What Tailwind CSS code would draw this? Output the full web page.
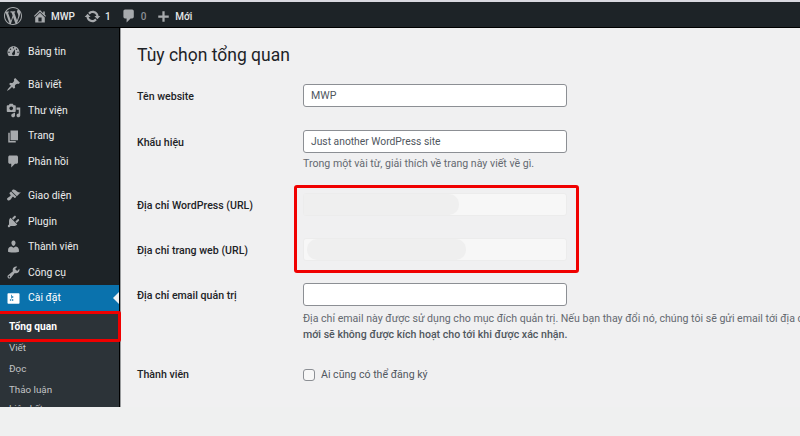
<!DOCTYPE html>
<html lang="en">
<head>
<meta charset="UTF-8">
<title>Tùy chọn tổng quan</title>
<script src="https://cdn.jsdelivr.net/npm/@tailwindcss/browser@4"></script>
</head>
<body class="w-[800px] h-[436px] overflow-hidden bg-[#eff0f0] font-['Roboto','Noto_Sans',sans-serif] text-[10.6px] text-[#3c434a]">
<div class="relative h-[436px] flex flex-col overflow-hidden">
  <!-- Top bar -->
  <div class="h-[28px] shrink-0 bg-[#1d2327] border-t-2 border-t-[#d9d9e0] border-b border-b-black pt-[3px] flex items-center text-[#e6e8e9] text-[10px] font-medium">
    <svg class="w-[18px] h-[18px] ml-[4px] text-[#a7aaad]" viewBox="0 0 20 20" fill="currentColor"><path d="M20 10c0-5.51-4.49-10-10-10C4.48 0 0 4.49 0 10c0 5.52 4.48 10 10 10 5.51 0 10-4.48 10-10zM7.78 15.37L4.37 6.22c.55-.02 1.17-.08 1.17-.08.5-.06.44-1.13-.06-1.11 0 0-1.45.11-2.37.11-.18 0-.37 0-.58-.01C4.12 2.69 6.87 1.11 10 1.11c2.33 0 4.45.87 6.05 2.34-.68-.11-1.65.39-1.65 1.58 0 .74.45 1.36.9 2.1.35.61.55 1.36.55 2.46 0 1.49-1.4 5-1.4 5l-3.03-8.37c.54-.02.82-.17.82-.17.5-.05.44-1.25-.06-1.22 0 0-1.44.12-2.38.12-.87 0-2.33-.12-2.33-.12-.5-.03-.56 1.2-.06 1.22l.92.08 1.26 3.41zM17.41 10c.24-.64.74-1.87.43-4.25.7 1.29 1.05 2.71 1.05 4.25 0 3.29-1.73 6.24-4.4 7.78.97-2.59 1.94-5.2 2.92-7.78zM6.1 18.09C3.12 16.65 1.11 13.53 1.11 10c0-1.3.23-2.48.72-3.59C3.25 10.3 4.67 14.2 6.1 18.09zm4.03-6.63l2.58 6.98c-.86.29-1.76.45-2.71.45-.79 0-1.57-.11-2.29-.33.81-2.38 1.62-4.74 2.42-7.1z"/></svg>
    <svg class="w-[16px] h-[16px] ml-[10px] text-[#a7aaad]" viewBox="0 0 20 20" fill="currentColor"><path d="M16 8.5l1.53 1.53-1.06 1.06L10 4.62l-6.47 6.47-1.06-1.06L10 2.5l4 4v-2h2v4zm-6-2.46l6 5.99V18H4v-5.97zM12 17v-5H8v5h4z"/></svg>
    <span class="ml-[3px]">MWP</span>
    <svg class="w-[17px] h-[17px] ml-[9px] text-[#a7aaad]" viewBox="0 0 20 20" fill="currentColor"><path d="M10.2 3.28c3.53 0 6.43 2.61 6.92 6h2.08l-3.5 4-3.5-4h2.32c-.45-1.97-2.21-3.45-4.32-3.45-1.45 0-2.73.71-3.54 1.78L4.95 5.66C6.23 4.2 8.11 3.28 10.2 3.28zm-.4 13.44c-3.52 0-6.43-2.61-6.92-6H.8l3.5-4c1.17 1.33 2.33 2.67 3.5 4H5.48c.45 1.97 2.21 3.45 4.32 3.45 1.45 0 2.73-.71 3.54-1.78l1.71 1.95c-1.28 1.46-3.15 2.38-5.25 2.38z"/></svg>
    <span class="ml-[4px]">1</span>
    <svg class="w-[16px] h-[16px] ml-[10px] text-[#a7aaad]" viewBox="0 0 20 20" fill="currentColor"><path d="M5 2h9c1.1 0 2 .9 2 2v7c0 1.1-.9 2-2 2h-2l-5 5v-5H5c-1.1 0-2-.9-2-2V4c0-1.1.9-2 2-2z"/></svg>
    <span class="ml-[4px] text-[#8c8f94]">0</span>
    <svg class="w-[15px] h-[15px] ml-[10px] text-[#a7aaad]" viewBox="0 0 20 20" fill="currentColor"><path d="M17 8.5v3h-5.5V17h-3v-5.5H3v-3h5.5V3h3v5.5z"/></svg>
    <span class="ml-[4px]">Mới</span>
  </div>

  <div class="flex h-[379px] shrink-0">
    <!-- Sidebar -->
    <aside class="w-[120px] shrink-0 bg-[#1d2327] border-r border-r-black flex flex-col overflow-hidden text-[#eceded] text-[10.4px]">
      <div class="h-[11px] shrink-0"></div>
      <a class="h-[25.6px] shrink-0 flex items-center"><svg class="w-[15px] h-[15px] ml-[6px] mr-[7px] text-[#a7aaad]" viewBox="0 0 20 20" fill="currentColor"><path d="M3.76 16h12.48c1.1-1.37 1.76-3.11 1.76-5 0-4.42-3.58-8-8-8s-8 3.58-8 8c0 1.89.66 3.63 1.76 5zM10 4c.55 0 1 .45 1 1s-.45 1-1 1-1-.45-1-1 .45-1 1-1zM6 6c.55 0 1 .45 1 1s-.45 1-1 1-1-.45-1-1 .45-1 1-1zm8 0c.55 0 1 .45 1 1s-.45 1-1 1-1-.45-1-1 .45-1 1-1zm-5.37 5.55L12 7v6c0 1.1-.9 2-2 2s-2-.9-2-2c0-.57.24-1.08.63-1.45zM4 10c.55 0 1 .45 1 1s-.45 1-1 1-1-.45-1-1 .45-1 1-1zm12 0c.55 0 1 .45 1 1s-.45 1-1 1-1-.45-1-1 .45-1 1-1z"/></svg>Bảng tin</a>
      <div class="h-[7.6px] shrink-0"></div>
      <a class="h-[25.6px] shrink-0 flex items-center"><svg class="w-[15px] h-[15px] ml-[6px] mr-[7px] text-[#a7aaad]" viewBox="0 0 20 20" fill="currentColor"><path d="M10.44 3.02l1.82-1.82 6.36 6.35-1.83 1.82c-1.05-.68-2.48-.57-3.41.36l-.75.75c-.92.93-1.04 2.35-.35 3.41l-1.83 1.82-2.41-2.41-2.8 2.79c-.42.42-3.38 2.71-3.8 2.29s1.86-3.39 2.28-3.81l2.79-2.79L4.1 9.36l1.83-1.82c1.05.69 2.48.57 3.4-.36l.75-.75c.93-.92 1.05-2.35.36-3.41z"/></svg>Bài viết</a>
      <a class="h-[25.6px] shrink-0 flex items-center"><svg class="w-[15px] h-[15px] ml-[6px] mr-[7px] text-[#a7aaad]" viewBox="0 0 20 20" fill="currentColor"><path d="M13 11V4c0-.55-.45-1-1-1h-1.67L9 1H5L3.67 3H2c-.55 0-1 .45-1 1v7c0 .55.45 1 1 1h10c.55 0 1-.45 1-1zM7 4.5c1.38 0 2.5 1.12 2.5 2.5S8.38 9.5 7 9.5 4.5 8.38 4.5 7 5.62 4.5 7 4.5zM14 6h5v10.5c0 1.38-1.12 2.5-2.5 2.5S14 17.88 14 16.5s1.12-2.5 2.5-2.5c.17 0 .34.02.5.05V9h-3V6zm-4 8.05V13h2v3.5c0 1.38-1.12 2.5-2.5 2.5S7 17.88 7 16.5 8.12 14 9.5 14c.17 0 .34.02.5.05z"/></svg>Thư viện</a>
      <a class="h-[25.6px] shrink-0 flex items-center"><svg class="w-[15px] h-[15px] ml-[6px] mr-[7px] text-[#a7aaad]" viewBox="0 0 20 20" fill="currentColor"><path d="M6 15V2h10v13H6zm-1 1h8v2H3V5h2v11z"/></svg>Trang</a>
      <a class="h-[25.6px] shrink-0 flex items-center"><svg class="w-[15px] h-[15px] ml-[6px] mr-[7px] text-[#a7aaad]" viewBox="0 0 20 20" fill="currentColor"><path d="M5 2h9c1.1 0 2 .9 2 2v7c0 1.1-.9 2-2 2h-2l-5 5v-5H5c-1.1 0-2-.9-2-2V4c0-1.1.9-2 2-2z"/></svg>Phản hồi</a>
      <div class="h-[8.4px] shrink-0"></div>
      <a class="h-[25.6px] shrink-0 flex items-center"><svg class="w-[15px] h-[15px] ml-[6px] mr-[7px] text-[#a7aaad]" viewBox="0 0 20 20" fill="currentColor"><path d="M14.48 11.06L7.41 3.99l1.5-1.5c.5-.56 2.3-.47 3.51.32 1.21.8 1.43 1.28 2.91 2.1 1.18.64 2.45 1.26 4.45.85zm-.71.71L6.7 4.7 4.93 6.47c-.39.39-.39 1.02 0 1.41l1.06 1.06c.39.39.39 1.03 0 1.42-.6.6-1.43 1.11-2.21 1.69-.35.26-.7.53-1.01.84C1.43 13.23.76 14.7 2.03 15.97c1.27 1.27 2.74.6 4.08-.74.31-.31.58-.66.84-1.01.58-.78 1.09-1.61 1.69-2.21.39-.39 1.03-.39 1.42 0l1.06 1.06c.39.39 1.02.39 1.41 0z"/></svg>Giao diện</a>
      <a class="h-[25.6px] shrink-0 flex items-center"><svg class="w-[15px] h-[15px] ml-[6px] mr-[7px] text-[#a7aaad]" viewBox="0 0 20 20" fill="currentColor"><path d="M13.11 4.36L9.87 7.6 8 5.73l3.24-3.24c.35-.34 1.05-.2 1.56.32.52.51.66 1.21.31 1.55zm-8 1.77l.91-1.12 9.01 9.01-1.19.84c-.71.71-2.63 1.16-3.82 1.16H6.14L4.9 17.26c-.59.59-1.54.59-2.12 0-.59-.58-.59-1.53 0-2.12l1.24-1.24v-3.88c0-1.13.4-3.19 1.09-3.89zm7.26 3.97l3.24-3.24c.34-.35 1.04-.21 1.55.31.52.51.66 1.21.31 1.55l-3.24 3.25z"/></svg>Plugin</a>
      <a class="h-[25.6px] shrink-0 flex items-center"><svg class="w-[15px] h-[15px] ml-[6px] mr-[7px] text-[#a7aaad]" viewBox="0 0 20 20" fill="currentColor"><path d="M10 9.25c-2.27 0-2.73-3.44-2.73-3.44C7 4.02 7.82 2 9.97 2c2.16 0 2.98 2.02 2.71 3.81 0 0-.41 3.44-2.68 3.44zm0 2.57L12.72 10c2.39 0 4.52 2.33 4.52 4.53v2.49s-3.65 1.13-7.24 1.13c-3.65 0-7.24-1.13-7.24-1.13v-2.49c0-2.25 1.94-4.48 4.47-4.48z"/></svg>Thành viên</a>
      <a class="h-[25.6px] shrink-0 flex items-center"><svg class="w-[15px] h-[15px] ml-[6px] mr-[7px] text-[#a7aaad]" viewBox="0 0 20 20" fill="currentColor"><path d="M16.68 9.77c-1.34 1.34-3.3 1.67-4.95.99l-5.41 6.52c-.99.99-2.59.99-3.58 0s-.99-2.59 0-3.57l6.52-5.42c-.68-1.65-.35-3.61.99-4.95 1.28-1.28 3.12-1.62 4.72-1.06l-2.89 2.89 2.82 2.82 2.86-2.87c.53 1.58.18 3.39-1.08 4.65zM3.81 16.21c.4.39 1.04.39 1.43 0 .4-.4.4-1.04 0-1.43-.39-.4-1.03-.4-1.43 0-.39.39-.39 1.03 0 1.43z"/></svg>Công cụ</a>
      <a class="relative h-[25.6px] shrink-0 flex items-center bg-[#0a72ad] text-white"><svg class="w-[15px] h-[15px] ml-[6px] mr-[7px]" viewBox="0 0 20 20" fill="currentColor"><path d="M18 16V4c0-.55-.45-1-1-1H3c-.55 0-1 .45-1 1v12c0 .55.45 1 1 1h14c.55 0 1-.45 1-1zM8 11h1c.55 0 1 .45 1 1s-.45 1-1 1H8v1.5c0 .28-.22.5-.5.5s-.5-.22-.5-.5V13H6c-.55 0-1-.45-1-1s.45-1 1-1h1V5.5c0-.28.22-.5.5-.5s.5.22.5.5V7h1c.55 0 1 .45 1 1s-.45 1-1 1h-1v5.5c0 .28-.22.5-.5.5s-.5-.22-.5-.5V9z"/></svg>Cài đặt<span class="absolute right-0 top-[7px] border-y-[6px] border-y-transparent border-r-[6px] border-r-[#f0f0f1]"></span></a>
      <div class="flex-1 bg-[#2c3338] text-[#c3c4c7] text-[9.8px] pt-[5px]">
        <a class="h-[21.3px] pl-[9px] flex items-center font-bold text-white text-[10.2px]">Tổng quan</a>
        <a class="h-[21.3px] pl-[9px] flex items-center">Viết</a>
        <a class="h-[21.3px] pl-[9px] flex items-center">Đọc</a>
        <a class="h-[21.3px] pl-[9px] flex items-center">Thảo luận</a>
        <a class="h-[21.3px] -mt-[2px] pl-[9px] flex items-center">Liên kết</a>
      </div>
    </aside>

    <!-- Main content -->
    <main class="flex-1 min-w-0 bg-[#f0f0f1] border-l border-l-[#9a9c9e] pl-[16px] overflow-hidden">
      <h1 class="text-[17.5px] font-normal text-[#1d2327] leading-[24px] mt-[15px] mb-[17px]">Tùy chọn tổng quan</h1>
      <div class="flex h-[46px]">
        <div class="w-[166px] pt-[5px] font-medium text-[#1d2327] whitespace-nowrap">Tên website</div>
        <div class="w-[264px] h-[23px] bg-white border border-[#8c8f94] rounded-[3px] px-[7px] flex items-center text-[#50575e]">MWP</div>
      </div>
      <div class="flex h-[63px]">
        <div class="w-[166px] pt-[5px] font-medium text-[#1d2327] whitespace-nowrap">Khẩu hiệu</div>
        <div class="w-[264px]">
          <div class="h-[23px] bg-white border border-[#8c8f94] rounded-[3px] px-[7px] flex items-center text-[#50575e] text-[10.3px]">Just another WordPress site</div>
          <p class="mt-[3px] whitespace-nowrap text-[#646970]">Trong một vài từ, giải thích về trang này viết về gì.</p>
        </div>
      </div>
      <div class="flex h-[45px]">
        <div class="w-[166px] pt-[5px] font-medium text-[#1d2327] whitespace-nowrap">Địa chỉ WordPress (URL)</div>
        <div class="w-[264px] h-[23px] bg-[#f7f7f7] border border-[#ececec] rounded-[3px]">
          <div class="w-[155px] h-full bg-[#efefef] rounded-r-[10px]"></div>
        </div>
      </div>
      <div class="flex h-[45px]">
        <div class="w-[166px] pt-[5px] font-medium text-[#1d2327] whitespace-nowrap">Địa chỉ trang web (URL)</div>
        <div class="w-[264px] h-[23px] bg-[#f7f7f7] border border-[#ececec] rounded-[3px] pl-[3px]">
          <div class="w-[159px] h-full bg-[#efefef] rounded-[10px]"></div>
        </div>
      </div>
      <div class="flex">
        <div class="w-[166px] pt-[5px] font-medium text-[#1d2327] whitespace-nowrap">Địa chỉ email quản trị</div>
        <div class="w-[264px]">
          <div class="h-[23px] bg-white border border-[#8c8f94] rounded-[3px]"></div>
          <p class="mt-[5px] leading-[16px] text-[#646970] whitespace-nowrap">Địa chỉ email này được sử dụng cho mục đích quản trị. Nếu bạn thay đổi nó, chúng tôi sẽ gửi email tới địa chỉ<br><strong class="font-medium text-[#50575e]">mới sẽ không được kích hoạt cho tới khi được xác nhận.</strong></p>
        </div>
      </div>
      <div class="flex mt-[24px]">
        <div class="w-[166px] font-medium text-[#1d2327] whitespace-nowrap">Thành viên</div>
        <label class="flex items-center gap-[6px] text-[#50575e]"><span class="w-[12px] h-[12px] bg-[#f7f7f7] border border-[#8c8f94] rounded-[3px]"></span>Ai cũng có thể đăng ký</label>
      </div>
    </main>
  </div>

  <!-- Annotation boxes -->
  <div class="absolute left-[-3px] top-[311px] w-[124px] h-[31px] border-[3px] border-[#f00000] rounded-[2px]"></div>
  <div class="absolute left-[294px] top-[185px] w-[285px] h-[88px] border-[3px] border-[#f00000] rounded-[3px]"></div>
</div>
</body>
</html>
